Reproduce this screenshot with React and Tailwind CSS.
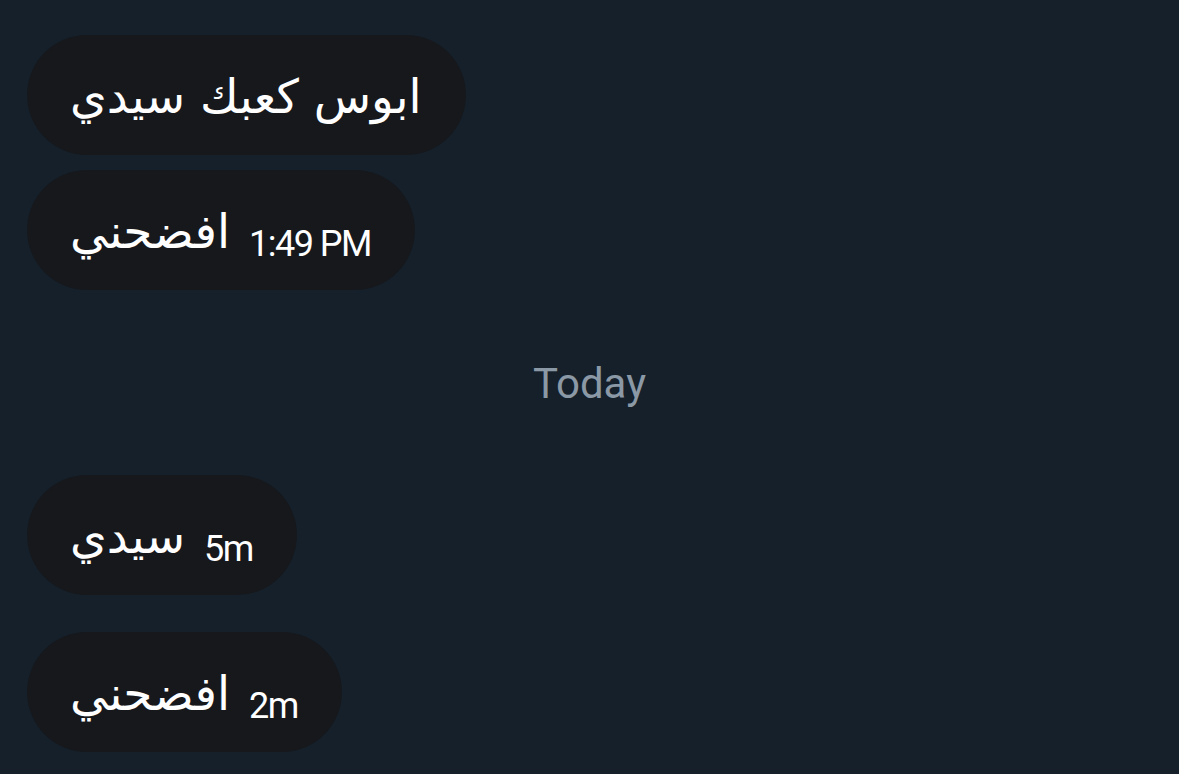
const MESSAGES_BEFORE = [
  { id: 1, text: "ابوس كعبك سيدي", time: null },
  { id: 2, text: "افضحني", time: "1:49 PM" },
];

const MESSAGES_TODAY = [
  { id: 3, text: "سيدي", time: "5m" },
  { id: 4, text: "افضحني", time: "2m" },
];

function Bubble({ text, time }) {
  return (
    <div className="self-start h-[120px] rounded-full bg-[#16181c] pl-[43px] pr-[44px] flex items-center">
      <span
        dir="rtl"
        className="text-white text-[47px] leading-none font-['DejaVu_Sans',sans-serif] pt-[2px]"
      >
        {text}
      </span>
      {time && (
        <span className="ml-[19px] mt-[28px] text-white text-[36px] tracking-[-1.5px] leading-none font-['Roboto',sans-serif]">
          {time}
        </span>
      )}
    </div>
  );
}

export default function App() {
  return (
    <div className="min-h-screen w-full bg-[#15202b] px-[27px] pt-[35px] flex flex-col">
      <div className="flex flex-col gap-[15px]">
        {MESSAGES_BEFORE.map((m) => (
          <Bubble key={m.id} text={m.text} time={m.time} />
        ))}
      </div>

      {/* date divider */}
      <div className="mt-[69px] mb-[68px] h-[48px] flex items-center justify-center text-[42px] text-[#8b98a5] font-['Roboto',sans-serif]">
        Today
      </div>

      <div className="flex flex-col gap-[37px]">
        {MESSAGES_TODAY.map((m) => (
          <Bubble key={m.id} text={m.text} time={m.time} />
        ))}
      </div>
    </div>
  );
}
